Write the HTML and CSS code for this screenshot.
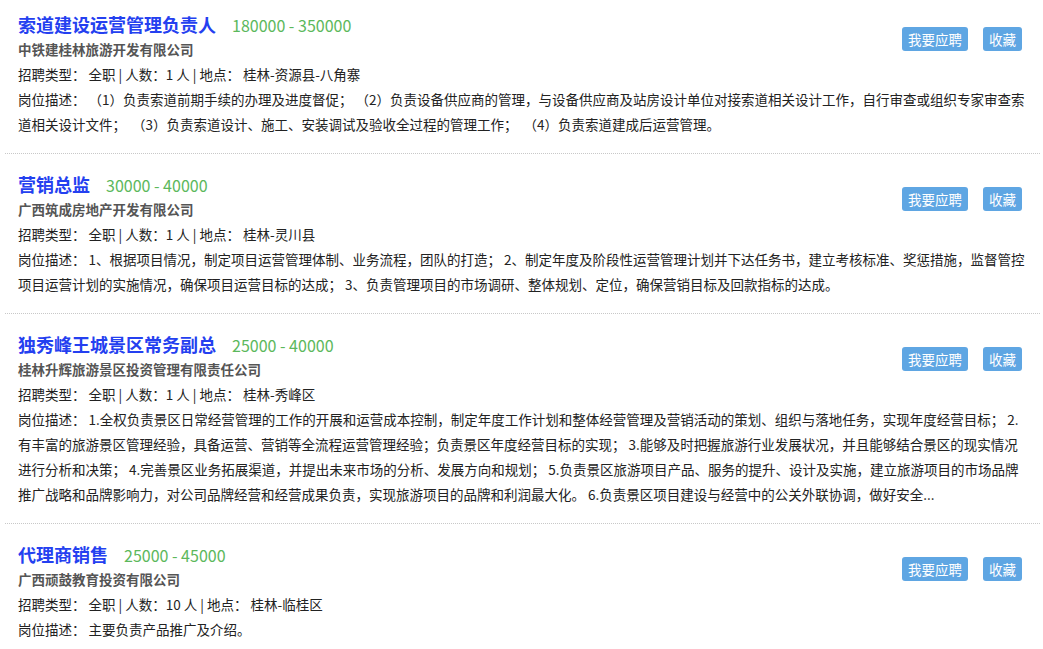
FILE: index.html
```html
<!DOCTYPE html>
<html lang="zh-CN">
<head>
  <meta charset="UTF-8">
  <title>职位列表</title>
  <link rel="stylesheet" href="styles.css">
</head>
<body>
  <div class="job-list">

    <div class="job">
      <div class="ops">
        <a class="btn">我要应聘</a>
        <a class="btn">收藏</a>
      </div>
      <h3 class="job-title">索道建设运营管理负责人<span class="salary">180000 - 350000</span></h3>
      <p class="company">中铁建桂林旅游开发有限公司</p>
      <p class="meta">招聘类型： 全职 | 人数：1 人 | 地点： 桂林-资源县-八角寨</p>
      <p class="desc">岗位描述： （1）负责索道前期手续的办理及进度督促； （2）负责设备供应商的管理，与设备供应商及站房设计单位对接索道相关设计工作，自行审查或组织专家审查索道相关设计文件； &nbsp;（3）负责索道设计、施工、安装调试及验收全过程的管理工作； &nbsp;（4）负责索道建成后运营管理。</p>
    </div>

    <div class="job">
      <div class="ops">
        <a class="btn">我要应聘</a>
        <a class="btn">收藏</a>
      </div>
      <h3 class="job-title">营销总监<span class="salary">30000 - 40000</span></h3>
      <p class="company">广西筑成房地产开发有限公司</p>
      <p class="meta">招聘类型： 全职 | 人数：1 人 | 地点： 桂林-灵川县</p>
      <p class="desc">岗位描述： 1、根据项目情况，制定项目运营管理体制、业务流程，团队的打造； 2、制定年度及阶段性运营管理计划并下达任务书，建立考核标准、奖惩措施，监督管控项目运营计划的实施情况，确保项目运营目标的达成； 3、负责管理项目的市场调研、整体规划、定位，确保营销目标及回款指标的达成。</p>
    </div>

    <div class="job">
      <div class="ops">
        <a class="btn">我要应聘</a>
        <a class="btn">收藏</a>
      </div>
      <h3 class="job-title">独秀峰王城景区常务副总<span class="salary">25000 - 40000</span></h3>
      <p class="company">桂林升辉旅游景区投资管理有限责任公司</p>
      <p class="meta">招聘类型： 全职 | 人数：1 人 | 地点： 桂林-秀峰区</p>
      <p class="desc">岗位描述： 1.全权负责景区日常经营管理的工作的开展和运营成本控制，制定年度工作计划和整体经营管理及营销活动的策划、组织与落地任务，实现年度经营目标； 2.有丰富的旅游景区管理经验，具备运营、营销等全流程运营管理经验；负责景区年度经营目标的实现； 3.能够及时把握旅游行业发展状况，并且能够结合景区的现实情况进行分析和决策； 4.完善景区业务拓展渠道，并提出未来市场的分析、发展方向和规划； 5.负责景区旅游项目产品、服务的提升、设计及实施，建立旅游项目的市场品牌推广战略和品牌影响力，对公司品牌经营和经营成果负责，实现旅游项目的品牌和利润最大化。 6.负责景区项目建设与经营中的公关外联协调，做好安全...</p>
    </div>

    <div class="job">
      <div class="ops">
        <a class="btn">我要应聘</a>
        <a class="btn">收藏</a>
      </div>
      <h3 class="job-title">代理商销售<span class="salary">25000 - 45000</span></h3>
      <p class="company">广西顽鼓教育投资有限公司</p>
      <p class="meta">招聘类型： 全职 | 人数：10 人 | 地点： 桂林-临桂区</p>
      <p class="desc">岗位描述： 主要负责产品推广及介绍。</p>
    </div>

  </div>
</body>
</html>
```

FILE: styles.css
```css
body {
  margin: 0;
  font-family: "Noto Sans CJK SC", "Noto Sans", sans-serif;
  font-size: 13.5px;
  color: #222;
  background: #fff;
}
.job-list {
  margin: 0 3px 0 5px;
}
.job {
  padding: 17px 11px 16px 13px;
  border-bottom: 1px dotted #c8c8c8;
}
.job:first-child {
  padding-top: 11px;
}
.job:last-child {
  border-bottom: none;
}
.ops {
  float: right;
  display: flex;
  gap: 15px;
  margin: 16px 7px 0 0;
}
.btn {
  display: block;
  height: 24px;
  line-height: 24px;
  padding: 0 6px;
  background: #5fa6e3;
  color: #fff;
  border-radius: 3px;
  font-size: 13.5px;
  cursor: pointer;
}
.job-title {
  margin: 0;
  height: 26px;
  font-size: 18px;
  line-height: 26px;
  font-weight: 700;
  color: #2440f0;
}
.salary {
  margin-left: 16px;
  font-size: 16px;
  line-height: 16px;
  font-weight: 400;
  color: #5cb85c;
}
.company {
  margin: 0;
  line-height: 25px;
  font-weight: 700;
  color: #555;
}
.meta, .desc {
  margin: 0;
  line-height: 25px;
}
```
